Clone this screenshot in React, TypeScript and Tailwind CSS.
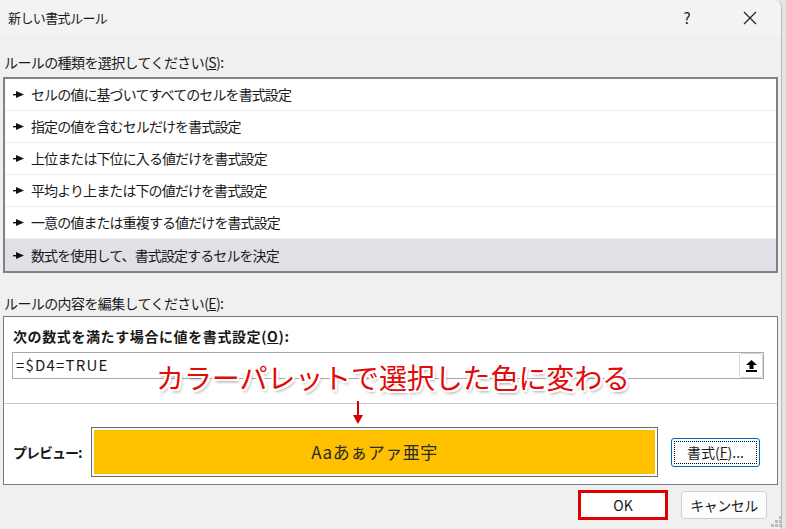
import React from 'react';

const rules = [
    'セルの値に基づいてすべてのセルを書式設定',
    '指定の値を含むセルだけを書式設定',
    '上位または下位に入る値だけを書式設定',
    '平均より上または下の値だけを書式設定',
    '一意の値または重複する値だけを書式設定',
    '数式を使用して、書式設定するセルを決定',
];

function Pointer() {
    return (
        <svg width="11" height="7" viewBox="0 0 11 7" className="shrink-0">
            <rect x="0" y="3" width="5" height="1.4" fill="#111" />
            <polygon points="3,0 11,3.5 3,7" fill="#111" />
        </svg>
    );
}

function UploadIcon() {
    return (
        <svg width="11" height="12" viewBox="0 0 11 12">
            <polygon points="5.5,0 11,5 7.5,5 7.5,9 3.5,9 3.5,5 0,5" fill="#000" />
            <rect x="0" y="10" width="11" height="2" fill="#000" />
        </svg>
    );
}

export default function App() {
    const selected = 5;

    return (
        <div className="relative flex w-[786px] h-[529px] overflow-hidden bg-[#e4e4e4] font-['Noto_Sans_CJK_JP',sans-serif] text-[#1a1a1a]">
            <div className="flex flex-col w-[782px] h-full shrink-0 bg-[#f0f0f0] border-r border-[#b9b9b9] rounded-tr-[8px] overflow-hidden">
                {/* title bar */}
                <div className="flex items-center h-[36px] bg-[#f3f3f3] shrink-0">
                    <span className="pl-[8px] text-[13px] tracking-[-0.6px]">新しい書式ルール</span>
                    <span className="ml-auto text-[15px] w-[12px] text-center mr-[50px]">?</span>
                    <svg width="14" height="14" viewBox="0 0 14 14" className="mr-[24px]">
                        <path d="M1 1 L13 13 M13 1 L1 13" stroke="#222" strokeWidth="1.2" />
                    </svg>
                </div>

                <div className="flex flex-col px-[3px]">
                    <div className="h-[41px] pt-[17px] pl-[1px] text-[14px] leading-[18px] tracking-[-0.6px]">
                        ルールの種類を選択してください(<span className="underline">S</span>):
                    </div>

                    {/* rule type list */}
                    <div className="flex flex-col h-[196px] border-2 border-[#828282] bg-white">
                        {rules.map((rule, i) => (
                            <div
                                key={rule}
                                className={`flex items-center gap-[7px] h-[32px] pl-[8px] shrink-0 ${i < rules.length - 1 ? 'border-b border-[#ececec]' : ''} ${i === selected ? 'bg-[#e0e0e6]' : ''}`}
                            >
                                <Pointer />
                                <span className="text-[14px] tracking-[-0.9px]">{rule}</span>
                            </div>
                        ))}
                    </div>

                    <div className="h-[43px] pt-[21px] pl-[1px] text-[14px] leading-[18px] tracking-[-0.6px]">
                        ルールの内容を編集してください(<span className="underline">E</span>):
                    </div>

                    {/* rule description */}
                    <div className="flex flex-col h-[169px] border border-[#7a7a7a] bg-white">
                        <div className="pt-[10px] pl-[9px] text-[14px] leading-[18px] font-bold tracking-[0.6px]">
                            次の数式を満たす場合に値を書式設定(<span className="underline">O</span>):
                        </div>
                        <div className="flex items-center h-[27px] mt-[7px] ml-[8px] mr-[13px] border border-[#a8a8a8]">
                            <span className="pl-[3px] text-[15px] tracking-[1.2px]">=$D4=TRUE</span>
                            <button className="ml-auto flex items-center justify-center w-[24px] h-[25px] bg-white border border-[#d6d6d6] rounded-[3px]">
                                <UploadIcon />
                            </button>
                        </div>
                        <div className="mt-[24px] border-t border-[#c9c9c9]" />
                        <div className="flex items-center mt-[23px]">
                            <span className="w-[87px] shrink-0 whitespace-nowrap pl-[9px] text-[14px] font-bold tracking-[-1px]">プレビュー:</span>
                            <div className="w-[567px] h-[50px] shrink-0 p-[2px] border border-[#6b6b6b] bg-white">
                                <div className="flex items-center justify-center w-full h-full bg-[#ffc000] text-[17px] tracking-[0.5px] text-[#2a2a2a]">
                                    Aaあぁアァ亜宇
                                </div>
                            </div>
                            <button className="ml-[13px] w-[89px] h-[29px] shrink-0 p-[2px] border border-[#0067c0] rounded-[3px] bg-white">
                                <span className="flex items-center justify-center w-full h-full border border-dotted border-black text-[14px]">
                                    書式(<span className="underline">F</span>)...
                                </span>
                            </button>
                        </div>
                    </div>

                    {/* dialog buttons */}
                    <div className="flex justify-end items-center mt-[5px] pr-[11px]">
                        <button className="flex items-center justify-center w-[90px] h-[30px] border-[3px] border-[#e00000] bg-white text-[14px]">
                            OK
                        </button>
                        <button className="flex items-center justify-center ml-[13px] w-[86px] h-[28px] border border-[#d0d0d0] rounded-[4px] bg-[#fdfdfd] text-[14px] tracking-[-0.5px]">
                            キャンセル
                        </button>
                    </div>
                </div>
            </div>

            {/* resize grip */}
            <svg width="12" height="12" viewBox="0 0 12 12" className="absolute right-[3px] bottom-[1px]">
                <rect x="8" y="0" width="3" height="3" fill="#bbb" />
                <rect x="4" y="4" width="3" height="3" fill="#bbb" />
                <rect x="8" y="4" width="3" height="3" fill="#bbb" />
                <rect x="0" y="8" width="3" height="3" fill="#bbb" />
                <rect x="4" y="8" width="3" height="3" fill="#bbb" />
                <rect x="8" y="8" width="3" height="3" fill="#bbb" />
            </svg>

            {/* annotation */}
            <div className="absolute left-[156px] top-[361px] text-[28px] leading-[32px] tracking-[-0.1px] text-[#e20a0a] [text-shadow:2px_0_0_#fff,-2px_0_0_#fff,0_2px_0_#fff,0_-2px_0_#fff,2px_2px_0_#fff,-2px_-2px_0_#fff,2px_-2px_0_#fff,-2px_2px_0_#fff,2px_3px_3px_rgba(0,0,0,0.4)]">
                カラーパレットで選択した色に変わる
            </div>
            <svg width="10" height="24" viewBox="0 0 10 24" className="absolute left-[353px] top-[401px]">
                <rect x="4" y="0" width="2" height="16" fill="#d40000" />
                <polygon points="0,14 10,14 5,23" fill="#d40000" />
            </svg>
        </div>
    );
}
